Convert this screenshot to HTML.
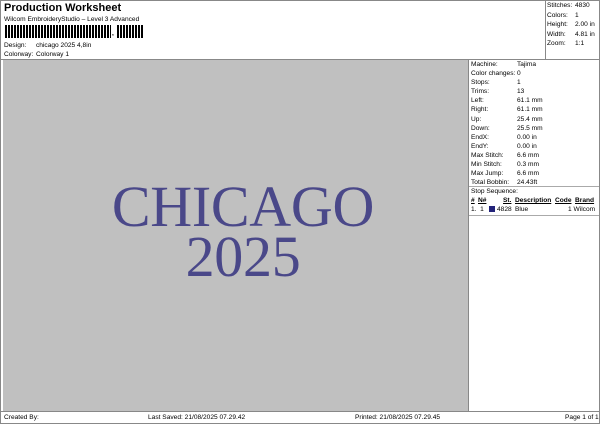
<!DOCTYPE html><html><head><style>
body{margin:0;width:600px;height:424px;background:#fff;font-family:"Liberation Sans",sans-serif;position:relative;overflow:hidden;color:#000}
.a{position:absolute;white-space:nowrap;font-size:6.6px;line-height:9px}
.l{position:absolute;background:#888}
</style></head><body>
<div class="l" style="left:0;top:0;width:600px;height:1px"></div>
<div class="l" style="left:0;top:0;width:1px;height:424px"></div>
<div class="l" style="left:599px;top:0;width:1px;height:424px"></div>
<div class="l" style="left:0;top:423px;width:600px;height:1px"></div>
<div class="a" style="left:4px;top:1px;font-size:11px;line-height:14px;font-weight:bold">Production Worksheet</div>
<div class="a" style="left:4px;top:15px">Wilcom EmbroideryStudio – Level 3 Advanced</div>
<div style="position:absolute;left:5px;top:25px;width:106px;height:13px;background:repeating-linear-gradient(90deg,#000 0 2px,#fff 2px 3px,#000 3px 5px,#fff 5px 6px)"></div>
<div class="a" style="left:112px;top:29px;font-weight:bold">,</div>
<div style="position:absolute;left:117px;top:25px;width:27px;height:13px;background:repeating-linear-gradient(90deg,#000 0 2px,#fff 2px 3px,#000 3px 5px,#fff 5px 6px)"></div>
<div class="a" style="left:4px;top:41px">Design:</div><div class="a" style="left:36px;top:41px">chicago 2025 4,8in</div>
<div class="a" style="left:4px;top:50px">Colorway:</div><div class="a" style="left:36px;top:50px">Colorway 1</div>
<div class="l" style="left:545px;top:0;width:1px;height:59px"></div>
<div class="a" style="left:547px;top:1px;line-height:9.5px">Stitches:<br>Colors:<br>Height:<br>Width:<br>Zoom:</div>
<div class="a" style="left:575px;top:1px;line-height:9.5px">4830<br>1<br>2.00 in<br>4.81 in<br>1:1</div>
<div class="l" style="left:0;top:59px;width:600px;height:1px"></div>
<div style="position:absolute;left:3px;top:60px;width:465px;height:351px;background:#c0c0c0"></div>
<div class="l" style="left:468px;top:60px;width:1px;height:351px"></div>
<div style="position:absolute;left:103px;top:182px;width:280px;text-align:center;font-family:'Liberation Serif',serif;font-size:58px;line-height:50px;color:#4a4889;letter-spacing:-0.3px">CHICAGO<br>2025</div>
<div class="a" style="left:471px;top:60px;line-height:9.1px">Machine:<br>Color changes:<br>Stops:<br>Trims:<br>Left:<br>Right:<br>Up:<br>Down:<br>EndX:<br>EndY:<br>Max Stitch:<br>Min Stitch:<br>Max Jump:<br>Total Bobbin:</div>
<div class="a" style="left:517px;top:60px;line-height:9.1px">Tajima<br>0<br>1<br>13<br>61.1 mm<br>61.1 mm<br>25.4 mm<br>25.5 mm<br>0.00 in<br>0.00 in<br>6.6 mm<br>0.3 mm<br>6.6 mm<br>24.43ft</div>
<div class="l" style="left:469px;top:186px;width:130px;height:1px;background:#aaa"></div>
<div class="a" style="left:471px;top:187px">Stop Sequence:</div>
<div class="a" style="left:471px;top:196px;font-weight:bold;text-decoration:underline">#</div>
<div class="a" style="left:478px;top:196px;font-weight:bold;text-decoration:underline">N#</div>
<div class="a" style="left:503px;top:196px;font-weight:bold;text-decoration:underline">St.</div>
<div class="a" style="left:515px;top:196px;font-weight:bold;text-decoration:underline">Description</div>
<div class="a" style="left:555px;top:196px;font-weight:bold;text-decoration:underline">Code</div>
<div class="a" style="left:575px;top:196px;font-weight:bold;text-decoration:underline">Brand</div>
<div class="a" style="left:471px;top:205px">1.&nbsp; 1</div>
<div style="position:absolute;left:489px;top:206px;width:6px;height:6px;background:#23237a"></div>
<div class="a" style="left:497px;top:205px">4828</div>
<div class="a" style="left:515px;top:205px">Blue</div>
<div class="a" style="left:568px;top:205px">1 Wilcom</div>
<div class="l" style="left:469px;top:215px;width:130px;height:1px;background:#aaa"></div>
<div class="l" style="left:0;top:411px;width:600px;height:1px"></div>
<div class="a" style="left:4px;top:413px">Created By:</div>
<div class="a" style="left:148px;top:413px">Last Saved: 21/08/2025 07.29.42</div>
<div class="a" style="left:355px;top:413px">Printed: 21/08/2025 07.29.45</div>
<div class="a" style="left:565px;top:413px">Page 1 of 1</div>
</body></html>
